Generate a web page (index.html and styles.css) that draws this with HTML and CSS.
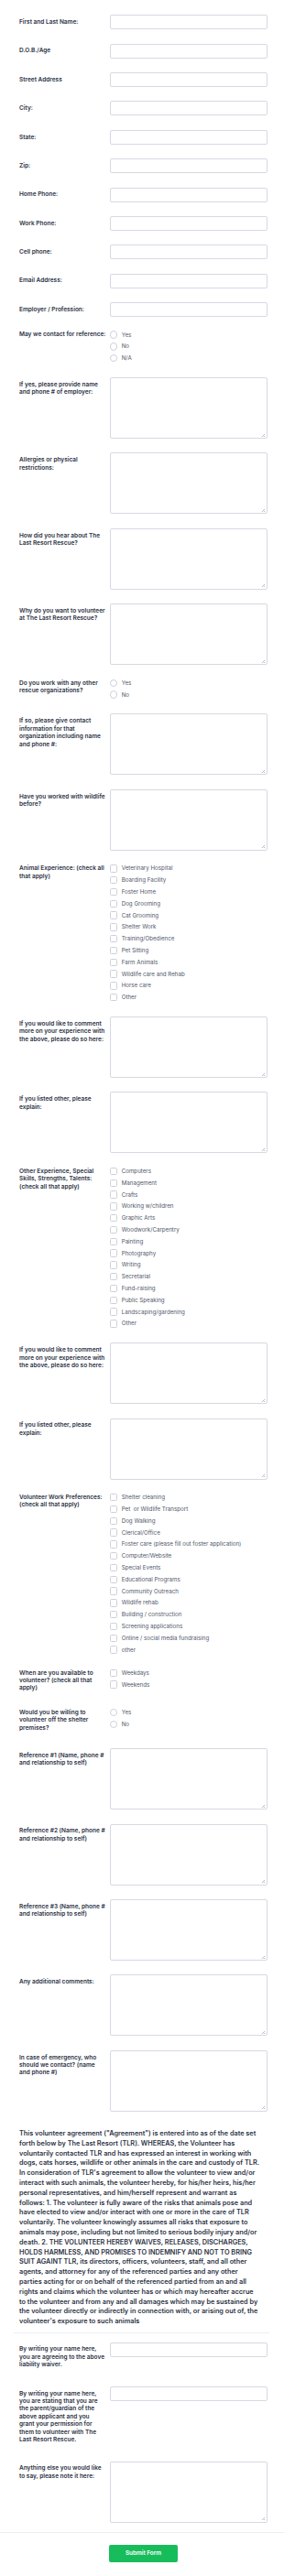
FILE: index.html
```html
<!DOCTYPE html>
<html lang="en">
<head>
<meta charset="utf-8">
<title>Volunteer Application</title>
<link rel="stylesheet" href="styles.css">
</head>
<body>
<form class="form-wrap">
<ul class="form">
  <li class="row"><label class="label">First and Last Name:</label><div class="control"><input class="input" type="text"></div></li>
  <li class="row"><label class="label">D.O.B./Age</label><div class="control"><input class="input" type="text"></div></li>
  <li class="row"><label class="label">Street Address</label><div class="control"><input class="input" type="text"></div></li>
  <li class="row"><label class="label">City:</label><div class="control"><input class="input" type="text"></div></li>
  <li class="row"><label class="label">State:</label><div class="control"><input class="input" type="text"></div></li>
  <li class="row"><label class="label">Zip:</label><div class="control"><input class="input" type="text"></div></li>
  <li class="row"><label class="label">Home Phone:</label><div class="control"><input class="input" type="text"></div></li>
  <li class="row"><label class="label">Work Phone:</label><div class="control"><input class="input" type="text"></div></li>
  <li class="row"><label class="label">Cell phone:</label><div class="control"><input class="input" type="text"></div></li>
  <li class="row"><label class="label">Email Address:</label><div class="control"><input class="input" type="text"></div></li>
  <li class="row"><label class="label">Employer / Profession:</label><div class="control"><input class="input" type="text"></div></li>

  <li class="row row-opts"><span class="label">May we contact for reference:</span>
    <ul class="control opts">
      <li class="opt"><input class="radio" type="radio" name="ref"><span>Yes</span></li>
      <li class="opt"><input class="radio" type="radio" name="ref"><span>No</span></li>
      <li class="opt"><input class="radio" type="radio" name="ref"><span>N/A</span></li>
    </ul>
  </li>

  <li class="row"><label class="label">If yes, please provide name and phone # of employer:</label><div class="control area"><textarea></textarea></div></li>
  <li class="row"><label class="label">Allergies or physical restrictions:</label><div class="control area"><textarea></textarea></div></li>
  <li class="row"><label class="label">How did you hear about The Last Resort Rescue?</label><div class="control area"><textarea></textarea></div></li>
  <li class="row"><label class="label">Why do you want to volunteer at The Last Resort Rescue?</label><div class="control area"><textarea></textarea></div></li>

  <li class="row row-opts"><span class="label">Do you work with any other rescue organizations?</span>
    <ul class="control opts">
      <li class="opt"><input class="radio" type="radio" name="other"><span>Yes</span></li>
      <li class="opt"><input class="radio" type="radio" name="other"><span>No</span></li>
    </ul>
  </li>

  <li class="row"><label class="label">If so, please give contact information for that organization including name and phone #:</label><div class="control area"><textarea></textarea></div></li>
  <li class="row"><label class="label">Have you worked with wildlife before?</label><div class="control area"><textarea></textarea></div></li>

  <li class="row row-opts"><span class="label">Animal Experience: (check all that apply)</span>
    <ul class="control opts">
      <li class="opt"><input class="check" type="checkbox"><span>Veterinary Hospital</span></li>
      <li class="opt"><input class="check" type="checkbox"><span>Boarding Facility</span></li>
      <li class="opt"><input class="check" type="checkbox"><span>Foster Home</span></li>
      <li class="opt"><input class="check" type="checkbox"><span>Dog Grooming</span></li>
      <li class="opt"><input class="check" type="checkbox"><span>Cat Grooming</span></li>
      <li class="opt"><input class="check" type="checkbox"><span>Shelter Work</span></li>
      <li class="opt"><input class="check" type="checkbox"><span>Training/Obedience</span></li>
      <li class="opt"><input class="check" type="checkbox"><span>Pet Sitting</span></li>
      <li class="opt"><input class="check" type="checkbox"><span>Farm Animals</span></li>
      <li class="opt"><input class="check" type="checkbox"><span>Wildlife care and Rehab</span></li>
      <li class="opt"><input class="check" type="checkbox"><span>Horse care</span></li>
      <li class="opt"><input class="check" type="checkbox"><span>Other</span></li>
    </ul>
  </li>

  <li class="row"><label class="label">If you would like to comment more on your experience with the above, please do so here:</label><div class="control area"><textarea></textarea></div></li>
  <li class="row"><label class="label">If you listed other, please explain:</label><div class="control area"><textarea></textarea></div></li>

  <li class="row row-opts"><span class="label">Other Experience, Special Skills, Strengths, Talents: (check all that apply)</span>
    <ul class="control opts">
      <li class="opt"><input class="check" type="checkbox"><span>Computers</span></li>
      <li class="opt"><input class="check" type="checkbox"><span>Management</span></li>
      <li class="opt"><input class="check" type="checkbox"><span>Crafts</span></li>
      <li class="opt"><input class="check" type="checkbox"><span>Working w/children</span></li>
      <li class="opt"><input class="check" type="checkbox"><span>Graphic Arts</span></li>
      <li class="opt"><input class="check" type="checkbox"><span>Woodwork/Carpentry</span></li>
      <li class="opt"><input class="check" type="checkbox"><span>Painting</span></li>
      <li class="opt"><input class="check" type="checkbox"><span>Photography</span></li>
      <li class="opt"><input class="check" type="checkbox"><span>Writing</span></li>
      <li class="opt"><input class="check" type="checkbox"><span>Secretarial</span></li>
      <li class="opt"><input class="check" type="checkbox"><span>Fund-raising</span></li>
      <li class="opt"><input class="check" type="checkbox"><span>Public Speaking</span></li>
      <li class="opt"><input class="check" type="checkbox"><span>Landscaping/gardening</span></li>
      <li class="opt"><input class="check" type="checkbox"><span>Other</span></li>
    </ul>
  </li>

  <li class="row"><label class="label">If you would like to comment more on your experience with the above, please do so here:</label><div class="control area"><textarea></textarea></div></li>
  <li class="row"><label class="label">If you listed other, please explain:</label><div class="control area"><textarea></textarea></div></li>

  <li class="row row-opts"><span class="label">Volunteer Work Preferences: (check all that apply)</span>
    <ul class="control opts">
      <li class="opt"><input class="check" type="checkbox"><span>Shelter cleaning</span></li>
      <li class="opt"><input class="check" type="checkbox"><span>Pet &nbsp;or Wildlife Transport</span></li>
      <li class="opt"><input class="check" type="checkbox"><span>Dog Walking</span></li>
      <li class="opt"><input class="check" type="checkbox"><span>Clerical/Office</span></li>
      <li class="opt"><input class="check" type="checkbox"><span>Foster care (please fill out foster application)</span></li>
      <li class="opt"><input class="check" type="checkbox"><span>Computer/Website</span></li>
      <li class="opt"><input class="check" type="checkbox"><span>Special Events</span></li>
      <li class="opt"><input class="check" type="checkbox"><span>Educational Programs</span></li>
      <li class="opt"><input class="check" type="checkbox"><span>Community Outreach</span></li>
      <li class="opt"><input class="check" type="checkbox"><span>Wildlife rehab</span></li>
      <li class="opt"><input class="check" type="checkbox"><span>Building / construction</span></li>
      <li class="opt"><input class="check" type="checkbox"><span>Screening applications</span></li>
      <li class="opt"><input class="check" type="checkbox"><span>Online / social media fundraising</span></li>
      <li class="opt"><input class="check" type="checkbox"><span>other</span></li>
    </ul>
  </li>

  <li class="row row-opts"><span class="label">When are you available to volunteer? (check all that apply)</span>
    <ul class="control opts">
      <li class="opt"><input class="check" type="checkbox"><span>Weekdays</span></li>
      <li class="opt"><input class="check" type="checkbox"><span>Weekends</span></li>
    </ul>
  </li>

  <li class="row row-opts"><span class="label">Would you be willing to volunteer off the shelter premises?</span>
    <ul class="control opts">
      <li class="opt"><input class="radio" type="radio" name="off"><span>Yes</span></li>
      <li class="opt"><input class="radio" type="radio" name="off"><span>No</span></li>
    </ul>
  </li>

  <li class="row"><label class="label">Reference #1 (Name, phone # and relationship to self)</label><div class="control area"><textarea></textarea></div></li>
  <li class="row"><label class="label">Reference #2 (Name, phone # and relationship to self)</label><div class="control area"><textarea></textarea></div></li>
  <li class="row"><label class="label">Reference #3 (Name, phone # and relationship to self)</label><div class="control area"><textarea></textarea></div></li>
  <li class="row"><label class="label">Any additional comments:</label><div class="control area"><textarea></textarea></div></li>
  <li class="row"><label class="label">In case of emergency, who should we contact? (name and phone #)</label><div class="control area"><textarea></textarea></div></li>

  <li class="para">This volunteer agreement ("Agreement") is entered into as of the date set<br>forth below by The Last Resort (TLR). WHEREAS, the Volunteer has<br>voluntarily contacted TLR and has expressed an interest in working with<br>dogs, cats horses, wildlife or other animals in the care and custody of TLR.<br>In consideration of TLR's agreement to allow the volunteer to view and/or<br>interact with such animals, the volunteer hereby, for his/her heirs, his/her<br>personal representatives, and him/herself represent and warrant as<br>follows: 1. The volunteer is fully aware of the risks that animals pose and<br>have elected to view and/or interact with one or more in the care of TLR<br>voluntarily. The volunteer knowingly assumes all risks that exposure to<br>animals may pose, including but not limited to serious bodily injury and/or<br>death. 2. THE VOLUNTEER HEREBY WAIVES, RELEASES, DISCHARGES,<br>HOLDS HARMLESS, AND PROMISES TO INDEMNIFY AND NOT TO BRING<br>SUIT AGAINT TLR, its directors, officers, volunteers, staff, and all other<br>agents, and attorney for any of the referenced parties and any other<br>parties acting for or on behalf of the referenced partied from an and all<br>rights and claims which the volunteer has or which may hereafter accrue<br>to the volunteer and from any and all damages which may be sustained by<br>the volunteer directly or indirectly in connection with, or arising out of, the<br>volunteer's exposure to such animals</li>
  <li class="divider"></li>

  <li class="row"><label class="label">By writing your name here, you are agreeing to the above liability waiver.</label><div class="control"><input class="input" type="text"></div></li>
  <li class="row"><label class="label">By writing your name here, you are stating that you are the parent/guardian of the above applicant and you grant your permission for them to volunteer with The Last Resort Rescue.</label><div class="control"><input class="input" type="text"></div></li>
  <li class="row"><label class="label">Anything else you would like to say, please note it here:</label><div class="control area"><textarea></textarea></div></li>

  <li class="divider-full"></li>
  <li class="actions"><button class="submit" type="submit">Submit Form</button></li>
</ul>
</form>
</body>
</html>
```

FILE: styles.css
```css
* {
  box-sizing: border-box;
}

body {
  margin: 0;
  background: #ffffff;
  font-family: Inter, "Noto Sans", "Liberation Sans", sans-serif;
  color: #2c3345;
}

.form-wrap {
  margin: 0;
}

.form {
  list-style: none;
  margin: 0;
  padding: 8.6px 0 0;
}

.row {
  display: flex;
  align-items: flex-start;
  padding: 7.7px 18.3px 7.7px 21px;
}

.label {
  flex: none;
  width: 99px;
  padding: 3.8px 4.5px 3.8px 0;
  font-size: 6.5px;
  line-height: 8.4px;
  font-weight: 600;
  color: #2c3345;
}

.control {
  flex: 1;
  min-width: 0;
}

.input {
  display: block;
  width: 100%;
  height: 16px;
  margin: 0;
  padding: 0 4px;
  border: 1px solid #d6d9e2;
  border-radius: 2px;
  background: #ffffff;
  font: inherit;
  font-size: 6.5px;
  color: #2c3345;
  outline: none;
}

.area {
  position: relative;
  height: 67px;
  border: 1px solid #d6d9e2;
  border-radius: 2px;
  background: #ffffff;
}

.area textarea {
  display: block;
  width: 100%;
  height: 100%;
  margin: 0;
  padding: 3px 4px;
  border: none;
  background: transparent;
  resize: none;
  font: inherit;
  font-size: 6.5px;
  outline: none;
}

.area::after {
  content: "";
  position: absolute;
  right: 1.5px;
  bottom: 1.5px;
  width: 3px;
  height: 3px;
  background: linear-gradient(135deg, transparent 0 40%, #b8bcc7 40% 55%, transparent 55% 75%, #b8bcc7 75% 90%, transparent 90%);
}

.row-opts .label {
  padding-top: 0;
  padding-bottom: 2.8px;
}

.opts {
  list-style: none;
  margin: -2.2px 0 -0.9px;
  padding: 0;
}

.opt {
  display: flex;
  align-items: center;
  height: 12.8px;
  font-size: 6.2px;
  line-height: 8px;
  color: #4f576b;
  white-space: nowrap;
}

.opt input {
  appearance: none;
  -webkit-appearance: none;
  flex: none;
  width: 8.4px;
  height: 8.4px;
  margin: 0 4.3px 0 0;
  border: 1px solid #cdd1db;
  background: #ffffff;
}

.radio {
  border-radius: 50%;
}

.check {
  border-radius: 1.5px;
}

.para {
  padding: 11.6px 14px 5.7px 21px;
  font-size: 7.3px;
  line-height: 10.8px;
  font-weight: 600;
  color: #2c3345;
}

.divider {
  margin: 0 16px 2.3px 15px;
  border-top: 1px solid #eceef3;
}

.divider-full {
  margin-top: 2.6px;
  border-top: 1px solid #eceef3;
}

.actions {
  padding: 12.7px 0 16px 119.3px;
}

.submit {
  display: block;
  width: 74.4px;
  height: 19.3px;
  margin: 0;
  padding: 0;
  border: none;
  border-radius: 2px;
  background: #18bd5b;
  color: #ffffff;
  font-family: Inter, "Noto Sans", sans-serif;
  font-size: 6.4px;
  font-weight: 600;
}
```
